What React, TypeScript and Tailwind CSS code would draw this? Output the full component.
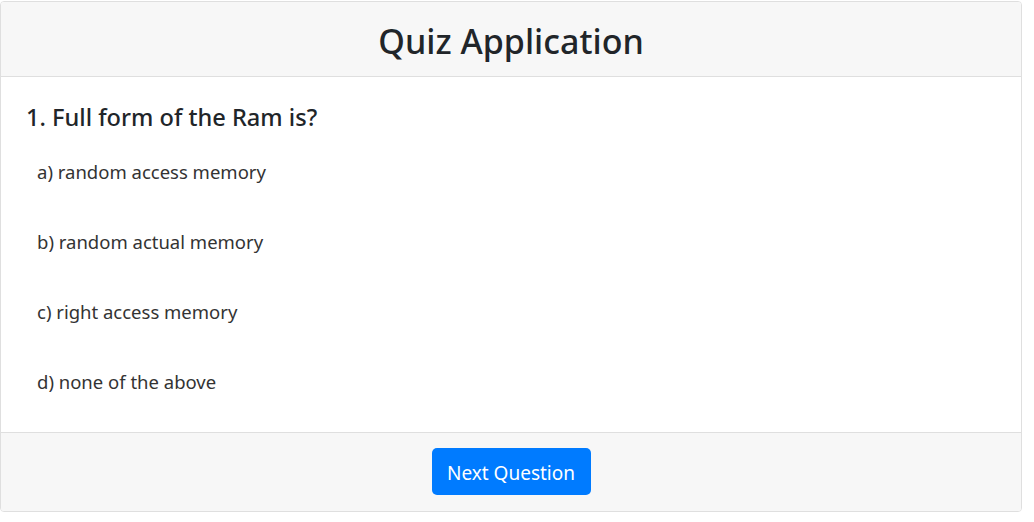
import React from 'react';

const options = [
    'a) random access memory',
    'b) random actual memory',
    'c) right access memory',
    'd) none of the above',
];

const App: React.FC = () => {
    return (
        <div className="bg-white min-h-[522px] pt-px" style={{ fontFamily: '"Noto Sans", "Open Sans", sans-serif' }}>
            <div className="w-[1022px] border border-[#dfdfdf] rounded-[4px] overflow-hidden text-[#212529]">
                <div className="bg-[#f7f7f7] border-b border-[#dfdfdf] h-[75px] flex items-center justify-center pt-[3px]">
                    <h1 className="text-[34px] font-medium leading-none">Quiz Application</h1>
                </div>
                <div className="px-[25px] pt-[24px] h-[355px]">
                    <h4 className="text-[23.6px] font-medium leading-[32px]">1. Full form of the Ram is?</h4>
                    <div className="pl-[11px] pt-[24px] flex flex-col">
                        {options.map((opt) => (
                            <div key={opt} className="h-[70px] text-[18.5px] leading-[30px] text-[#333]">
                                {opt}
                            </div>
                        ))}
                    </div>
                </div>
                <div className="bg-[#f7f7f7] border-t border-[#dfdfdf] h-[79px] flex justify-center pt-[15px]">
                    <button className="h-[47px] w-[159px] bg-[#007bff] text-white text-[19px] rounded-[5px] pt-[3px]">
                        Next Question
                    </button>
                </div>
            </div>
        </div>
    );
};

export default App;
